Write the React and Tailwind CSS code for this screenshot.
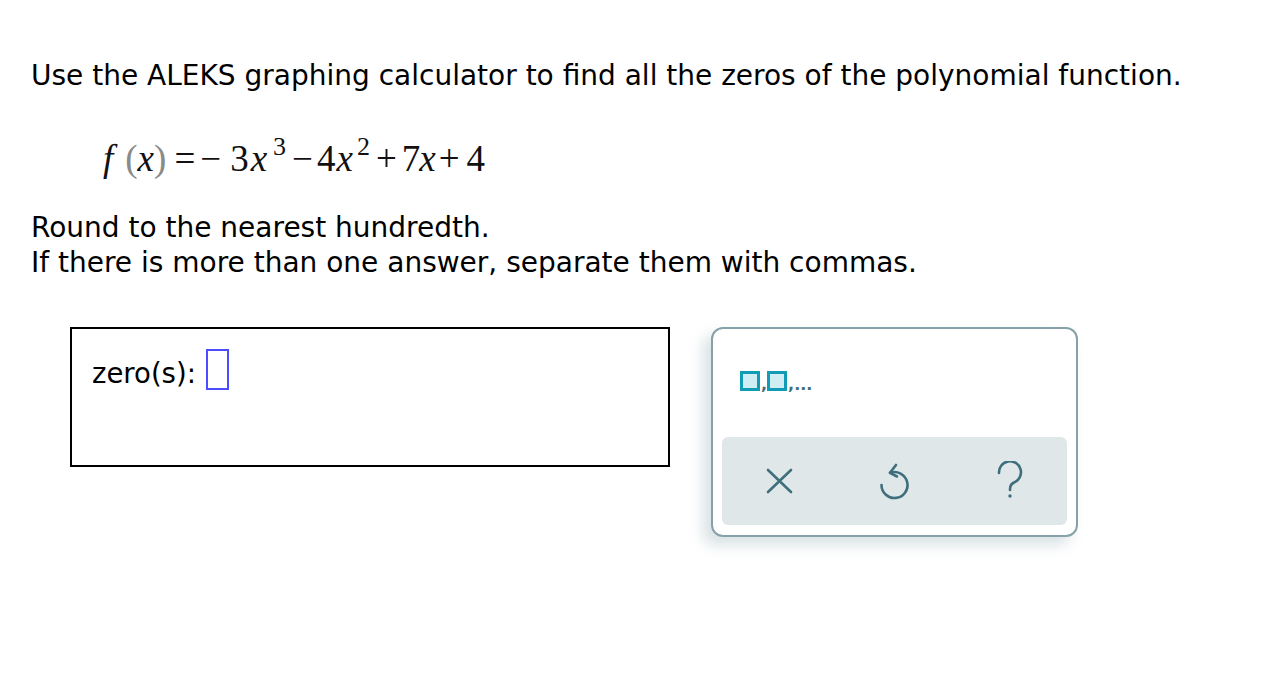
import React from "react";

const serif = { fontFamily: '"Liberation Serif", "Times New Roman", serif' };

export default function App() {
  return (
    <div className="w-[1280px] h-[686px] bg-white text-black relative overflow-hidden" style={{ fontFamily: '"DejaVu Sans", Verdana, sans-serif' }}>
      <div className="pl-[31px] pt-[58px]">
        <p className="text-[28px] leading-[35px]">Use the ALEKS graphing calculator to find all the zeros of the polynomial function.</p>
        <div className="pl-[72px] mt-[47px] h-[40px] flex items-baseline text-[37px] leading-none text-[#111]" style={serif}>
          <span className="italic">f</span>
          <span className="text-[#8a8a8a] ml-[12px]">(</span>
          <span className="italic">x</span>
          <span className="text-[#8a8a8a]">)</span>
          <span className="ml-[8px]">=</span>
          <span className="ml-[5px]">−</span>
          <span className="ml-[9px]">3</span>
          <span className="italic ml-[2px]">x</span>
          <span className="relative -top-[16px] text-[26px] ml-[6px]">3</span>
          <span className="ml-[6px]">−</span>
          <span className="ml-[4px]">4</span>
          <span className="italic ml-[1px]">x</span>
          <span className="relative -top-[16px] text-[26px] ml-[4px]">2</span>
          <span className="ml-[6px]">+</span>
          <span className="ml-[5px]">7</span>
          <span className="italic -ml-[1px]">x</span>
          <span className="ml-[3px]">+</span>
          <span className="ml-[7px]">4</span>
        </div>
        <div className="mt-[30px] text-[28px] leading-[35px]">
          <p>Round to the nearest hundredth.</p>
          <p>If there is more than one answer, separate them with commas.</p>
        </div>
      </div>
      <div className="flex items-start pl-[70px] mt-[47px] gap-[41px]">
        <div className="w-[600px] h-[140px] border-2 border-black pl-[20px] pt-[20px] flex items-start">
          <span className="text-[27.5px] leading-[48px]">zero(s):</span>
          <span className="ml-[10px] w-[23px] h-[41px] border-2 border-[#4d4dff]"></span>
        </div>
        <div className="w-[367px] h-[210px] border-2 border-[#86a1a9] rounded-[12px] bg-white shadow-[-8px_8px_14px_rgba(120,150,160,0.28)] p-[9px] flex flex-col">
          <div className="h-[99px] flex items-start pl-[18px] pt-[33px]">
            <div className="flex items-end text-[#40707e]">
              <span className="w-[20px] h-[20px] border-[3px] border-[#0f9cb4] bg-[#cfeef4]"></span>
              <span className="text-[16px] leading-[12px] font-bold ml-[1px]">,</span>
              <span className="w-[20px] h-[20px] border-[3px] border-[#0f9cb4] bg-[#cfeef4]"></span>
              <span className="text-[16px] leading-[12px] font-bold ml-[1px]">,...</span>
            </div>
          </div>
          <div className="h-[88px] bg-[#e0e7e9] rounded-[6px] grid grid-cols-3 items-center justify-items-center">
            <svg width="27" height="26" viewBox="0 0 27 26" fill="none" stroke="#3f6f7c" strokeWidth="2.6" strokeLinecap="round">
              <path d="M2 2 L25 24 M25 2 L2 24" />
            </svg>
            <svg width="30" height="40" viewBox="0 0 30 40" fill="none" stroke="#3f6f7c" strokeWidth="2.6" strokeLinecap="round" strokeLinejoin="round">
              <path d="M10 11.8 A13 13 0 1 1 1.5 24" />
              <path d="M16 4 L10 11.8 L17 15.5" />
            </svg>
            <svg width="26" height="40" viewBox="0 0 26 40" fill="none" stroke="#3f6f7c" strokeWidth="2.6" strokeLinecap="round">
              <path d="M2 12 A11 11 0 1 1 17 21.5 Q13 23.5 13 28 L13 29" />
              <circle cx="13" cy="35" r="1.7" fill="#3f6f7c" stroke="none" />
            </svg>
          </div>
        </div>
      </div>
    </div>
  );
}
